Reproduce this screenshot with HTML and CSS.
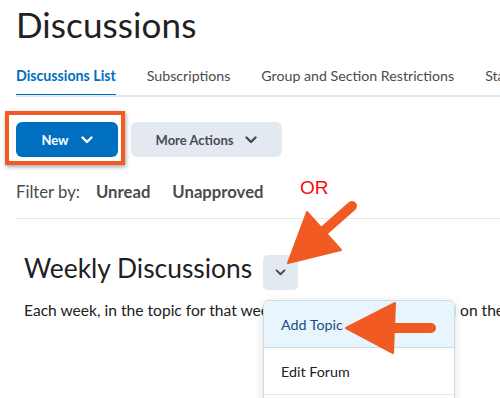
FILE: index.html
```html
<!DOCTYPE html>
<html>
<head>
<meta charset="utf-8">
<link rel="stylesheet" href="styles.css">
</head>
<body>
<div class="page">
  <h1 class="title">Discussions</h1>
  <nav class="tabs">
    <span class="tab active">Discussions List</span>
    <span class="tab">Subscriptions</span>
    <span class="tab">Group and Section Restrictions</span>
    <span class="tab">Statistics</span>
  </nav>
  <div class="actions">
    <span class="highlight">
      <button class="btn primary">New <svg class="chev" viewBox="0 0 12 8" width="12" height="8"><path d="M1.5 1.5 L6 6 L10.5 1.5" fill="none" stroke="currentColor" stroke-width="2.4" stroke-linecap="round" stroke-linejoin="round"/></svg></button>
    </span>
    <button class="btn secondary">More Actions <svg class="chev" viewBox="0 0 12 8" width="12" height="8"><path d="M1.5 1.5 L6 6 L10.5 1.5" fill="none" stroke="currentColor" stroke-width="2.4" stroke-linecap="round" stroke-linejoin="round"/></svg></button>
  </div>
  <div class="filter">
    <span class="filter-label">Filter by:</span>
    <span class="filter-opt">Unread</span>
    <span class="filter-opt">Unapproved</span>
    <span class="or">OR</span>
  </div>
  <div class="forum">
    <div class="forum-head">
      <h2 class="forum-title">Weekly Discussions</h2>
      <button class="ctx"><svg viewBox="0 0 12 8" width="11" height="7"><path d="M1.5 1.5 L6 6 L10.5 1.5" fill="none" stroke="currentColor" stroke-width="2.2" stroke-linecap="round" stroke-linejoin="round"/></svg></button>
    </div>
    <p class="desc">Each week, in the topic for that week, post your full reply based on the reading.</p>
    <div class="menu">
      <div class="menu-item hover">Add Topic</div>
      <div class="menu-item">Edit Forum</div>
      <div class="menu-item">Delete Forum</div>
    </div>
  </div>
  <svg class="arrows" width="500" height="398" viewBox="0 0 500 398">
    <g fill="#f15a22" stroke="#f15a22" stroke-linejoin="round">
      <line x1="352" y1="206" x2="318" y2="236" stroke-width="10" stroke-linecap="round"/>
      <polygon points="288,263 307,212 341,250" stroke-width="2"/>
      <line x1="431" y1="328" x2="385" y2="328" stroke-width="10" stroke-linecap="round"/>
      <polygon points="346,328 395,303 393,353" stroke-width="2"/>
    </g>
  </svg>
</div>
</body>
</html>
```
FILE: styles.css
```css
* { box-sizing: border-box; }
html, body { margin: 0; padding: 0; background: #fff; }
body {
  font-family: Lato, "Noto Sans", sans-serif;
  color: #494c4e;
  width: 500px;
  height: 398px;
  overflow: hidden;
}
.page { position: relative; padding: 0 0 0 16px; height: 398px; overflow: hidden; }
.title {
  margin: 0;
  padding-top: 3px;
  font-size: 35px;
  font-weight: 400;
  line-height: 42px;
  color: #202122;
  letter-spacing: 0.1px;
}
.tabs {
  display: flex;
  gap: 31px;
  margin-top: 16px;
  border-bottom: 2px solid #e3e9f1;
  white-space: nowrap;
  overflow: hidden;
}
.tab {
  font-size: 14.2px;
  line-height: 20px;
  padding: 5px 0 8px;
  color: #494c4e;
  border-bottom: 3px solid transparent;
  margin-bottom: -2px;
}
.tab.active {
  color: #006fbf;
  font-weight: 700;
  border-bottom-color: #006fbf;
}
.actions {
  display: flex;
  gap: 13px;
  margin-top: 25px;
  align-items: center;
}
.highlight { position: relative; display: inline-flex; }
.highlight::after {
  content: "";
  position: absolute;
  left: -11px; top: -11px; right: -7px; bottom: -8px;
  border: 4px solid #f15a22;
  box-shadow: 1px 2px 4px rgba(0,0,0,0.35);
}
.btn {
  font-family: Lato, "Noto Sans", sans-serif;
  font-size: 13px;
  font-weight: 700;
  height: 35px;
  border: none;
  border-radius: 6px;
  display: inline-flex;
  align-items: center;
  justify-content: center;
  gap: 12px;
  padding: 0;
}
.btn.primary { background: #006fbf; color: #fff; width: 102px; }
.btn.secondary { background: #e3e9f1; color: #494c4e; width: 151px; }
.chev { display: block; }
.filter {
  position: relative;
  display: flex;
  align-items: center;
  margin-top: 23px;
  font-size: 16.7px;
  line-height: 24px;
  border-bottom: 1px solid #e3e9f1;
  padding-bottom: 14px;
}
.filter-label { margin-right: 16px; }
.filter-opt { font-weight: 700; color: #494c4e; margin-right: 22px; }
.or {
  position: absolute;
  left: 284px;
  top: -4px;
  font-family: "Liberation Sans", Arial, sans-serif;
  color: #f70d0d;
  font-size: 19px;
}
.forum { position: relative; display: flow-root; padding-left: 8px; }
.forum-head {
  display: flex;
  align-items: flex-start;
  gap: 11px;
  margin-top: 33px;
}
.forum-title {
  margin: 0;
  font-size: 26.4px;
  font-weight: 400;
  color: #202122;
  line-height: 32px;
}
.ctx {
  width: 35px; height: 35px;
  border: none;
  background: #e3e9f1;
  border-radius: 5px;
  display: flex;
  align-items: center;
  justify-content: center;
  color: #494c4e;
  padding: 0;
  margin-top: 3px;
}
.desc {
  margin: 9px 0 0;
  font-size: 15.6px;
  line-height: 22px;
  white-space: nowrap;
  color: #202122;
}
.menu {
  position: absolute;
  left: 247px;
  top: 81px;
  width: 192px;
  background: #fff;
  border: 1px solid #d3d9e3;
  border-radius: 6px;
  box-shadow: 0 2px 10px rgba(0,0,0,0.12);
  overflow: hidden;
}
.menu-item {
  height: 47px;
  padding: 0 17px;
  display: flex;
  align-items: center;
  font-size: 14.3px;
  color: #202122;
  border-bottom: 1px solid #e3e9f1;
}
.menu-item.hover { background: #e8f5fc; color: #1b4f84; border-bottom-color: #c6ddef; }
.arrows { position: absolute; left: 0; top: 0; pointer-events: none; }
```
